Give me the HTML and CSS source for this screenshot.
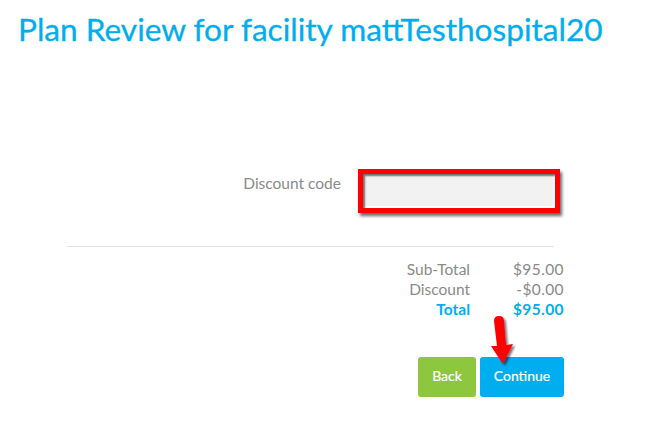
FILE: index.html
```html
<!DOCTYPE html>
<html>
<head>
<meta charset="utf-8">
<link rel="stylesheet" href="styles.css">
</head>
<body>
<h1 class="title">Plan Review for facility mattTesthospital20</h1>
<div class="main">
  <div class="code-row">
    <label class="code-label">Discount code</label>
    <div class="code-input"></div>
  </div>
  <div class="divider"></div>
  <div class="totals">
    <span class="t-label">Sub-Total</span><span class="t-value">$95.00</span>
    <span class="t-label">Discount</span><span class="t-value">-$0.00</span>
    <span class="t-label strong">Total</span><span class="t-value strong">$95.00</span>
  </div>
  <div class="actions">
    <button class="btn btn-back">Back</button>
    <button class="btn btn-continue">Continue</button>
    <svg class="arrow" width="34" height="54" viewBox="0 0 34 54">
      <defs>
        <filter id="sh" x="-50%" y="-50%" width="200%" height="200%">
          <feDropShadow dx="2" dy="2" stdDeviation="1.2" flood-color="#000" flood-opacity="0.55"/>
        </filter>
      </defs>
      <path d="M8 8 Q8 3 13 3 Q18 3 18 8 L20 32 L27 31 L17 51 L5 33 L11 33 Z" fill="#f00" filter="url(#sh)"/>
    </svg>
  </div>
</div>
</body>
</html>
```
FILE: styles.css
```css
html, body {
  margin: 0;
  padding: 0;
  background: #fff;
}
body {
  font-family: "Lato", "Open Sans", sans-serif;
  width: 660px;
  height: 429px;
  overflow: hidden;
}
.title {
  margin: 0;
  padding: 9px 0 0 18px;
  font-size: 31.6px;
  font-weight: 400;
  color: #00aeef;
  line-height: 40px;
  -webkit-text-stroke: 0.3px #00aeef;
}
.main {
  margin-left: 67px;
  width: 497px;
  padding-top: 120px;
}
.code-row {
  display: flex;
  align-items: flex-start;
}
.code-label {
  width: 274px;
  text-align: right;
  font-size: 15.5px;
  color: #8a8a8a;
  line-height: 20px;
  padding-top: 4px;
}
.code-input {
  margin-left: 17px;
  width: 192px;
  height: 34px;
  border: 5px solid #f00;
  background: #f2f2f2;
  box-shadow: 2px 3px 3px rgba(0,0,0,0.6), inset 2px 2px 2px rgba(0,0,0,0.55), inset -2px -2px 0 #fff;
}
.divider {
  margin-top: 33px;
  width: 487px;
  height: 1px;
  background: #e3e3e3;
}
.totals {
  margin-top: 12px;
  display: grid;
  grid-template-columns: 1fr 94px;
  font-size: 15.5px;
  line-height: 20px;
  color: #8a8a8a;
}
.t-label, .t-value {
  text-align: right;
}
.t-value {
  letter-spacing: 0.4px;
}
.strong {
  color: #00aeef;
  font-weight: 700;
}
.actions {
  position: relative;
  margin-top: 38px;
  display: flex;
  justify-content: flex-end;
  gap: 4px;
}
.btn {
  height: 40px;
  border: none;
  border-radius: 3px;
  color: #fff;
  font-family: inherit;
  font-size: 14px;
  padding: 0 0 3px 0;
  -webkit-text-stroke: 0.2px #fff;
}
.btn-back {
  width: 58px;
  background: #8dc63f;
}
.btn-continue {
  width: 84px;
  background: #00aeef;
}
.arrow {
  position: absolute;
  left: 419px;
  top: -44px;
}
```
